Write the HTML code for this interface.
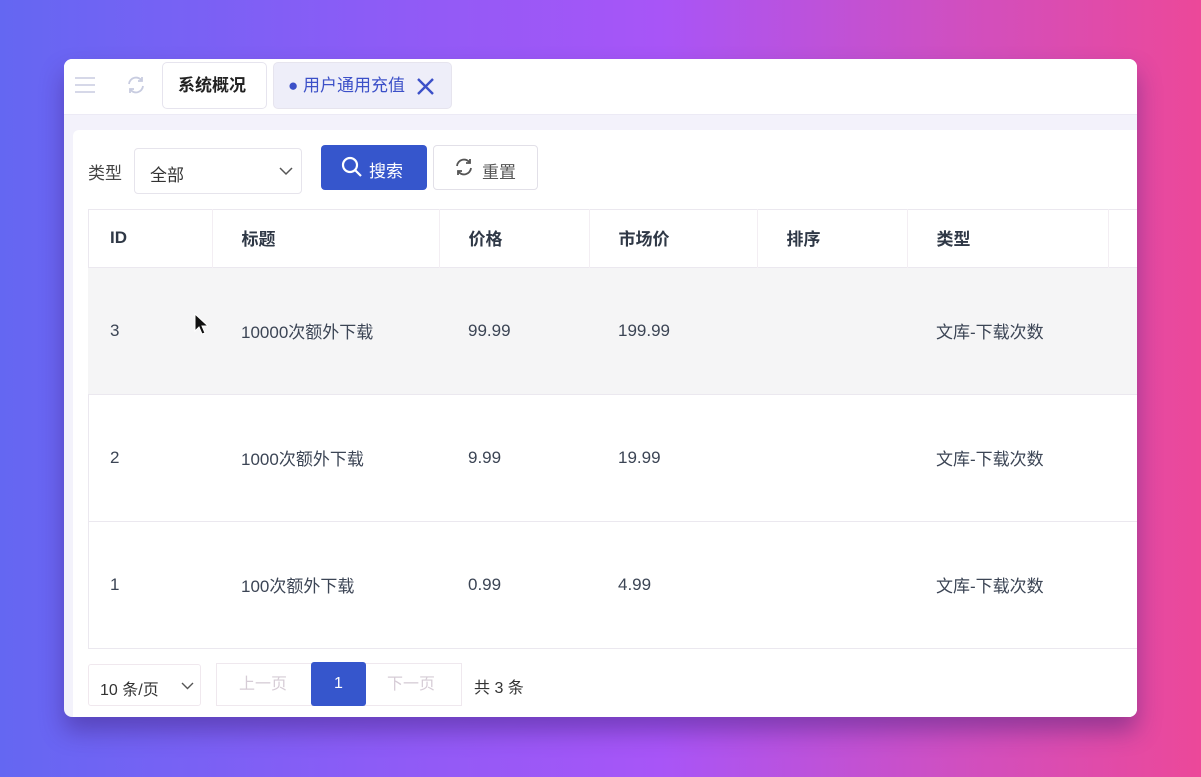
<!DOCTYPE html>
<html><head><meta charset="utf-8"><style>
*{box-sizing:border-box;margin:0;padding:0}
body{width:1201px;height:777px;overflow:hidden;background:linear-gradient(90deg,#6467f2 0%,#8b5cf6 30%,#a855f7 55%,#d04fc0 80%,#ec4899 100%);font-family:"Liberation Sans","Noto Sans CJK SC",sans-serif;position:relative}
.win{position:absolute;left:64px;top:59px;width:1073px;height:658px;background:#f3f2fb;border-radius:8px;overflow:hidden;box-shadow:0 14px 24px rgba(60,30,120,.45)}
.top{position:absolute;left:0;top:0;width:100%;height:56px;background:#fff;border-bottom:1px solid #eceaf5}
.tab{position:absolute;top:3px;height:47px;border:1px solid #e6e4ee;border-radius:5px;font-size:17px;line-height:45px;color:#222;padding:0 15px;font-weight:bold}
.card{position:absolute;left:9px;top:71px;right:0;bottom:0;background:#fff;border-top-left-radius:6px}
.a{position:absolute}
table{position:absolute;left:15px;top:79px;width:1060px;border-collapse:collapse;font-size:17px;color:#3c4555}
td{height:127px;border-top:1px solid #ebe8ef;vertical-align:middle}
th{height:58px;text-align:left;font-weight:bold;color:#2f3846;font-size:17px}
th,td{padding-left:29px}
th:first-child,td:first-child{padding-left:22px}
th+th{border-left:1px solid #f3eef3}
</style></head><body>
<div class="win">
 <div class="top">
  <svg class="a" style="left:11px;top:17px" width="20" height="18"><g stroke="#c8cce0" stroke-width="1.6"><line x1="0" y1="2" x2="20" y2="2"/><line x1="0" y1="9" x2="20" y2="9"/><line x1="0" y1="16" x2="20" y2="16"/></g></svg>
  <svg class="a" style="left:62px;top:16px" width="20" height="20" viewBox="0 0 20 20" fill="none" stroke="#c8cce0" stroke-width="1.8"><path d="M3 9a7 7 0 0 1 13-3M17 11a7 7 0 0 1-13 3"/><path d="M16 2v4h-4M4 18v-4h4"/></svg>
  <div class="tab" style="left:98px;width:105px;padding:0 15px">系统概况</div>
  <div class="tab" style="left:209px;width:179px;background:#eeeef9;color:#3c50c8;padding:0 0 0 14px;font-weight:normal">● 用户通用充值<svg class="a" style="left:143px;top:15px" width="17" height="17"><path d="M1 1l15 15M16 1L1 16" stroke="#3c50c8" stroke-width="2.4"/></svg></div>
 </div>
 <div class="card">
  <div class="a" style="left:15px;top:29px;font-size:17px;color:#444">类型</div>
  <div class="a" style="left:61px;top:18px;width:168px;height:46px;border:1px solid #e6e4ec;border-radius:4px;font-size:17px;color:#333;padding:12px 0 0 15px">全部<svg class="a" style="right:8px;top:18px" width="14" height="9"><path d="M1 1l6 6 6-6" fill="none" stroke="#555" stroke-width="1.5"/></svg></div>
  <div class="a" style="left:248px;top:15px;width:106px;height:45px;background:#3656cc;border-radius:4px;color:#fff;font-size:17px;padding:12px 0 0 48px"><svg class="a" style="left:20px;top:11px" width="22" height="22" fill="none" stroke="#fff" stroke-width="2.2"><circle cx="9" cy="9" r="7"/><path d="M14 14l6 6"/></svg>搜索</div>
  <div class="a" style="left:360px;top:15px;width:105px;height:45px;border:1px solid #e2e0e8;border-radius:4px;color:#555;font-size:17px;padding:12px 0 0 48px"><svg class="a" style="left:20px;top:11px" width="20" height="20" viewBox="0 0 20 20" fill="none" stroke="#555" stroke-width="1.8"><path d="M3 9a7 7 0 0 1 13-3M17 11a7 7 0 0 1-13 3"/><path d="M16 2v4h-4M4 18v-4h4"/></svg>重置</div>
  <div class="a" style="left:15px;top:79px;width:1060px;height:440px;border:1px solid #ebe8ef"></div>
  <table>
   <tr><th style="width:124px">ID</th><th style="width:227px">标题</th><th style="width:150px">价格</th><th style="width:168px">市场价</th><th style="width:150px">排序</th><th style="width:201px">类型</th><th></th></tr>
   <tr style="background:#f5f5f6"><td>3</td><td>10000次额外下载</td><td>99.99</td><td>199.99</td><td></td><td>文库-下载次数</td><td></td></tr>
   <tr><td>2</td><td>1000次额外下载</td><td>9.99</td><td>19.99</td><td></td><td>文库-下载次数</td><td></td></tr>
   <tr><td>1</td><td>100次额外下载</td><td>0.99</td><td>4.99</td><td></td><td>文库-下载次数</td><td></td></tr>
  </table>
  <svg class="a" style="left:121px;top:183px" width="14" height="22"><path d="M1 1v17l4-4 3 7 3-1-3-7h6z" fill="#111" stroke="#fff" stroke-width="1"/></svg>
  <div class="a" style="left:15px;top:534px;width:113px;height:42px;border:1px solid #f0e8ee;border-radius:3px;font-size:16px;color:#333;padding:11px 0 0 11px">10 条/页<svg class="a" style="right:6px;top:17px" width="13" height="8"><path d="M1 1l5.5 5.5L12 1" fill="none" stroke="#555" stroke-width="1.4"/></svg></div>
  <div class="a" style="left:143px;top:533px;width:246px;height:43px;border:1px solid #efe8ee;font-size:16px;color:#d6ccd6;line-height:41px"><span class="a" style="left:22px">上一页</span><span class="a" style="left:170px">下一页</span></div>
  <div class="a" style="left:238px;top:532px;width:55px;height:44px;background:#3656cc;border-radius:3px;color:#fff;font-size:16px;text-align:center;line-height:44px">1</div>
  <div class="a" style="left:401px;top:544px;font-size:16px;color:#333">共 3 条</div>
 </div>
</div>
</body></html>
